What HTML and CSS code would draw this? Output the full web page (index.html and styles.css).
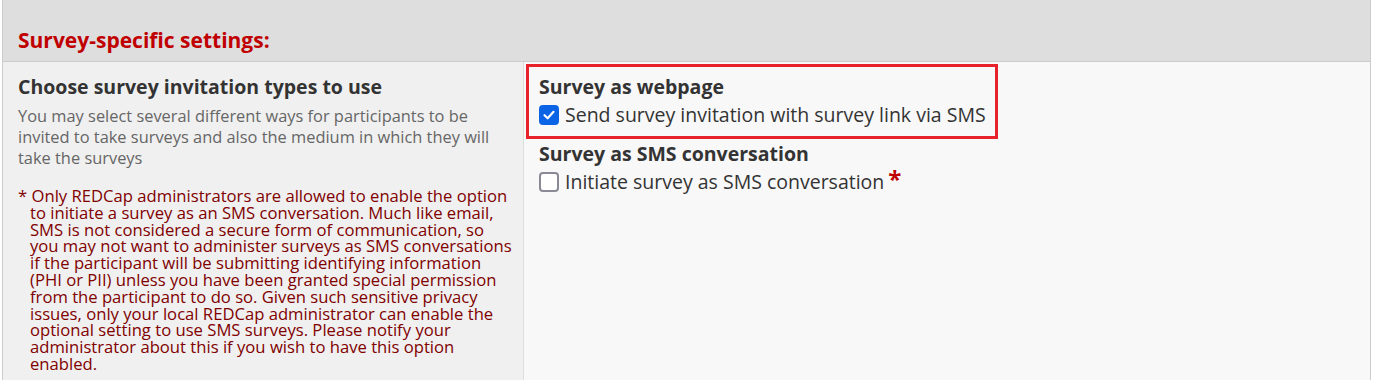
FILE: index.html
```html
<!DOCTYPE html>
<html lang="en">

<head>
    <meta charset="UTF-8">
    <title>Survey-specific settings</title>
    <link rel="stylesheet" href="styles.css">
</head>

<body>

    <div class="settings">
        <div class="settings-header">Survey-specific settings:</div>

        <div class="settings-row">
            <div class="settings-label">
                <div class="label-title">Choose survey invitation types to use</div>
                <div class="label-desc">You may select several different ways for participants to be invited to take surveys and also the medium in which they will take the surveys</div>
                <div class="label-note">* Only REDCap administrators are allowed to enable the option to initiate a survey as an SMS conversation. Much like email, SMS is not considered a secure form of communication, so you may not want to administer surveys as SMS conversations if the participant will be submitting identifying information (PHI or PII) unless you have been granted special permission from the participant to do so. Given such sensitive privacy issues, only your local REDCap administrator can enable the optional setting to use SMS surveys. Please notify your administrator about this if you wish to have this option enabled.</div>
            </div>

            <div class="settings-value">
                <div class="option-group highlighted">
                    <div class="group-title">Survey as webpage</div>
                    <label class="option">
                        <span class="checkbox checked">
                            <svg width="14" height="14" viewBox="0 0 14 14"><path d="M2.5 7.2 L5.7 10.3 L11.5 3.8" fill="none" stroke="#fff" stroke-width="2.2" stroke-linecap="round" stroke-linejoin="round"/></svg>
                        </span>
                        Send survey invitation with survey link via SMS
                    </label>
                </div>

                <div class="option-group">
                    <div class="group-title">Survey as SMS conversation</div>
                    <label class="option">
                        <span class="checkbox"></span>
                        Initiate survey as SMS conversation<span class="required">*</span>
                    </label>
                </div>
            </div>
        </div>
    </div>

</body>

</html>
```

FILE: styles.css
```css
body {
    margin: 0;
    padding: 0 2px;
    font-family: 'Open Sans', sans-serif;
    background: #fff;
}

.settings {
    border-left: 1px solid #ccc;
    border-right: 1px solid #ccc;
}

.settings-header {
    background: #dedede;
    border-bottom: 1px solid #ccc;
    height: 62px;
    box-sizing: border-box;
    padding: 26px 15px 0;
    font-size: 21px;
    font-weight: bold;
    color: #c00000;
}

.settings-row {
    display: flex;
    height: 318px;
}

.settings-label {
    width: 521px;
    flex-shrink: 0;
    box-sizing: border-box;
    padding: 11px 15px 0;
    background: #f0f0f0;
    border-right: 1px solid #ddd;
}

.label-title {
    font-size: 19.5px;
    font-weight: bold;
    color: #333;
    line-height: 27px;
}

.label-desc {
    margin-top: 5px;
    font-size: 16.4px;
    line-height: 21px;
    color: #666;
}

.label-note {
    margin-top: 20px;
    margin-right: -5px;
    padding-left: 12px;
    text-indent: -12px;
    font-size: 16.65px;
    line-height: 16.8px;
    color: #800000;
}

.settings-value {
    flex: 1;
    background: #f8f8f8;
    padding: 2px 0 0 2px;
}

.option-group {
    padding: 0 13px;
}

.option-group.highlighted {
    display: inline-block;
    border: 3px solid #e8222a;
    padding: 7px 9px 6px 10px;
    margin-bottom: 2px;
}

.group-title {
    font-size: 19.5px;
    font-weight: bold;
    color: #333;
    line-height: 26px;
}

.option {
    display: flex;
    align-items: center;
    gap: 6px;
    font-size: 19.5px;
    color: #333;
    line-height: 30px;
}

.checkbox {
    width: 20px;
    height: 20px;
    flex-shrink: 0;
    box-sizing: border-box;
    border: 2px solid #8a8a96;
    border-radius: 4px;
    background: #fff;
    display: inline-flex;
    align-items: center;
    justify-content: center;
}

.checkbox.checked {
    background: #0b63e5;
    border-color: #0b63e5;
}

.required {
    color: #c00000;
    font-weight: bold;
    font-size: 24px;
    margin-left: -2px;
    align-self: flex-start;
    line-height: 24px;
}
```
